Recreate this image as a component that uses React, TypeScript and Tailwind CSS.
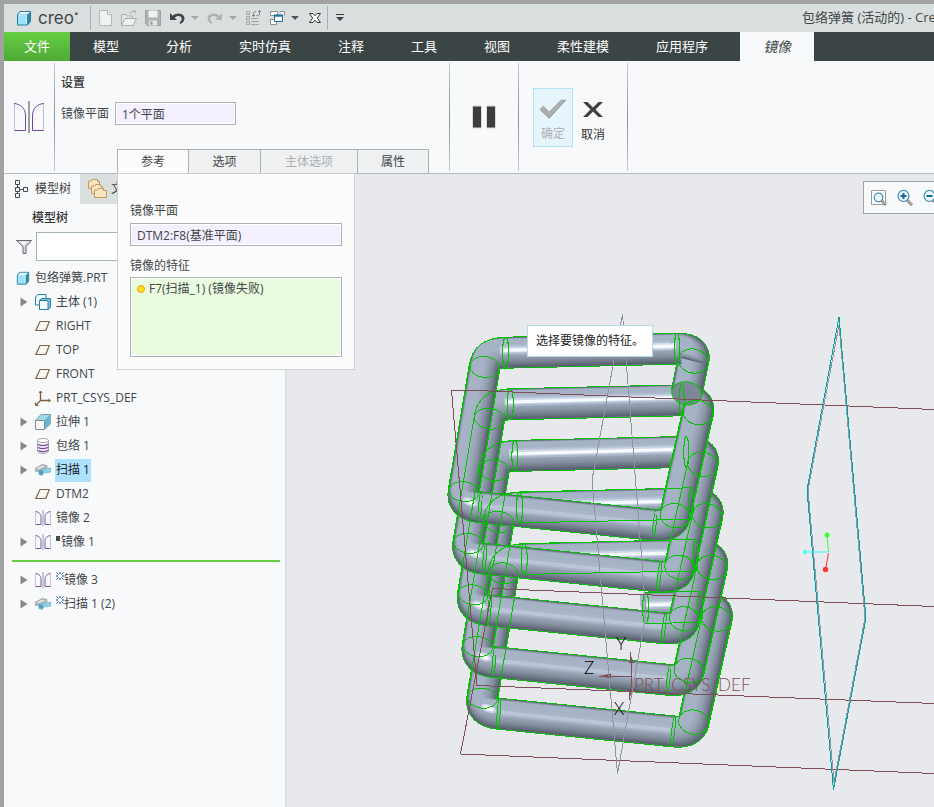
import type { ReactNode } from "react";

type IconProps = { className?: string };

const CubeIcon = ({ className = "w-4 h-4" }: IconProps) => (
  <svg viewBox="0 0 16 16" className={className} aria-hidden="true">
    <path d="M1.500 4.500 4 1.500h10.500v10l-3 3.500h-10z" fill="#2f86a8" stroke="#2b7d9e" />
    <path d="M2 4.500 4.300 2H14l-2.700 2.500z" fill="#e3f7ff" />
    <path d="M2 5h9v9.500H2z" fill="#9be2fb" />
    <path d="M2 5h8.500v9" fill="none" stroke="#c9f1ff" />
  </svg>
);

const NewIcon = () => (
  <svg viewBox="0 0 16 16" className="w-4 h-4" fill="#f0f2f2" stroke="#b3b8b8" aria-hidden="true">
    <path d="M2.500.5h8l4 4v11h-12z" />
    <path d="M10.500.5v4h4" />
  </svg>
);

const OpenIcon = () => (
  <svg viewBox="0 0 16 16" className="w-4 h-4" fill="#e4e7e7" stroke="#a9aeae" aria-hidden="true">
    <path d="M.5 15V4.500h4l1 1.500h6v3" />
    <path d="M.5 15.500 4 8.500h11.500l-3.500 7z" fill="#f0f2f2" />
    <path d="M9 4c1-2.500 3-3 5-2.500M12.500 0l2.500 1.600-2 2" fill="none" />
  </svg>
);

const SaveIcon = () => (
  <svg viewBox="0 0 16 16" className="w-4 h-4" aria-hidden="true">
    <path d="M.5.5h15v15h-13l-2-2z" fill="#aeb3b4" stroke="#9ea3a4" />
    <path d="M3.500.5h9v7h-9z" fill="#f1f3f3" />
    <path d="M4 10.500h8v5H4z" fill="#e3e6e6" />
    <path d="M5.500 11.500h2v3h-2z" fill="#8f9495" />
  </svg>
);

const UndoIcon = () => (
  <svg viewBox="0 0 16 16" className="w-4 h-4" aria-hidden="true">
    <path d="M1 3v7h7L5.700 7.700C8 5.600 12 5.400 12.600 8.300c.3 1.700-.6 3.200-2.100 4.200l1 1.500c2.800-1.500 4.400-3.600 3.900-6.500C14.500 2.900 7.500 2 3.700 5.700z" fill="#3f4648" />
  </svg>
);

const RedoIcon = () => (
  <svg viewBox="0 0 16 16" className="w-4 h-4" aria-hidden="true">
    <path d="M15 3v7H8l2.300-2.300C8 5.600 4 5.400 3.400 8.300c-.3 1.700.6 3.200 2.100 4.200l-1 1.500C1.700 12.500.1 10.400.6 7.500 1.500 2.900 8.500 2 12.300 5.700z" fill="#aeb4b4" />
  </svg>
);

const RegenIcon = () => (
  <svg viewBox="0 0 16 16" className="w-4 h-4" fill="none" stroke="#a2a7a8" aria-hidden="true">
    <path d="M1.500 1.500h3v3h-3zM1.500 6.500h3v3h-3zM1.500 11.500h3v3h-3zM6 8.500h7M6 11.500h8M6 14.500h8" />
    <path d="M8.500 6V3.500C8.500 2 10 1.500 11 2M7 5l1.500 1.500L10 5M14.500 1v3c0 1.500-1.500 2-3 1.500M13 2l1.500-1.500L16 2" stroke="#7c8284" />
  </svg>
);

const WindowsIcon = () => (
  <svg viewBox="0 0 16 16" className="w-4 h-4" aria-hidden="true">
    <path d="M1.500 1.500h7v4h-7zM1.500 9.500h6v5h-6zM10.500 1.500h5v4" fill="#fff" stroke="#888e91" />
    <path d="M5.500 5.500h8v6h-8z" fill="#fff" stroke="#1c7196" />
    <path d="M5 4.500h9v2.200H5z" fill="#1c7196" />
  </svg>
);

const CloseWindowIcon = () => (
  <svg viewBox="0 0 16 16" className="w-4 h-4" aria-hidden="true">
    <path d="M2.500 3.500h3.500L8 5.800l2-2.300h3.500L10.300 8l3.200 4.500H10L8 10.200l-2 2.300H2.500L5.700 8z" fill="#fff" stroke="#33393b" />
  </svg>
);

const Caret = ({ dim = false }: { dim?: boolean }) => (
  <svg viewBox="0 0 8 8" className="-ml-0.5 w-2 h-2" aria-hidden="true">
    <path d="M0 2h8L4 6z" fill={dim ? "#a3a9a9" : "#50575a"} />
  </svg>
);

const MirrorIcon = () => (
  <svg viewBox="0 0 16 16" className="w-4 h-4" fill="none" aria-hidden="true">
    <path d="M.5 15V1.500M15.500 15V1.500" stroke="#c9bfe0" />
    <path d="M.5 1.500c4 .5 5.500 3 5.500 6v7H.5M15.500 1.500c-4 .5-5.500 3-5.500 6v7h5.500" stroke="#7d56a5" />
    <path d="M8 0v16" stroke="#9a9fa3" />
  </svg>
);

const BigMirrorIcon = () => (
  <svg viewBox="0 0 30 32" className="w-[30px] h-8" fill="none" aria-hidden="true">
    <path d="M.5 29.500V2.500M29.500 29.500V2.500" stroke="#c5b9df" />
    <path d="M0 2.500C6.500 3 11.500 7 11.500 15v14.500H.5M30 2.500C23.500 3 18.500 7 18.500 15v14.500h11" stroke="#75449b" />
    <path d="M15 0v32" stroke="#9c9fa2" strokeWidth="2" />
  </svg>
);

const PlaneIcon = () => (
  <svg viewBox="0 0 16 16" className="w-4 h-4" fill="none" aria-hidden="true">
    <path d="M5 3.500h9.300l-3.500 9H.8z" stroke="#80663a" strokeWidth="1.200" />
  </svg>
);

const CsysIcon = () => (
  <svg viewBox="0 0 16 16" className="w-4 h-4" fill="none" stroke="#7b5f33" aria-hidden="true">
    <path d="M5.500 1v9.500H15M5.500 10.500 1 15" strokeWidth="1.300" />
    <path d="M4 3l1.500-2L7 3M13.500 9l2 1.500-2 1.500M.5 12.500v3h3" />
  </svg>
);

const BodyIcon = () => (
  <svg viewBox="0 0 16 16" className="w-4 h-4" fill="#eefaff" stroke="#297f9f" aria-hidden="true">
    <path d="M.5 3 3 .5h8v8L8.500 11h-8z" />
    <path d="m4.500 6.500 2-2h9v8.500l-2 2.500h-9z" fill="#7cc7e2" />
    <path d="M4.500 6.500h8.500v9H4.500z" fill="#f7fcff" />
  </svg>
);

const ExtrudeIcon = () => (
  <svg viewBox="0 0 16 16" className="w-4 h-4" aria-hidden="true">
    <path d="M.5 6.500 6 .5h9.500l-6 6z" fill="#9fd9ee" stroke="#849aa5" />
    <path d="m9.500 6.500 6-6V10l-6 5.500z" fill="#61b6d5" stroke="#8fb0be" />
    <path d="M.5 6.500h9v9h-9z" fill="#f8f8f8" stroke="#8a8f93" />
  </svg>
);

const WrapIcon = () => (
  <svg viewBox="0 0 16 16" className="w-4 h-4" aria-hidden="true">
    <path d="M2.500 2.500v11c1 2.500 10 2.500 11 0v-11" fill="#f4f4f7" stroke="#a7a7ae" />
    <ellipse cx="8" cy="2.500" rx="5.500" ry="2" fill="#fff" stroke="#a7a7ae" />
    <path d="M3 6.500c3 1.600 8 1.600 10.500-.5M3 9.500c3 1.600 8 1.600 10.500-.5M3 12.500c3 1.600 8 1.600 10.500-.5" fill="none" stroke="#77499f" strokeWidth="1.200" />
  </svg>
);

const SweepIcon = () => (
  <svg viewBox="0 0 16 16" className="w-4 h-4" aria-hidden="true">
    <path d="M0 6.500 7 2.500l5 1v2L6 7.500v2.700L0 9z" fill="#b4babd" stroke="#858b8f" strokeWidth=".6" />
    <path d="m1 6.500 6-3 3.500.8L4.500 7z" fill="#dfe3e4" />
    <path d="M4 8.500 8 7l8-1v4l-7 1-2 2.500-3-1z" fill="#8fcfe5" stroke="#6aabc4" strokeWidth=".6" />
    <path d="M4 8.500h4v4.500l-4-.8z" fill="#49a0c3" />
  </svg>
);

const FolderStackIcon = () => (
  <svg viewBox="0 0 20 20" className="w-5 h-5" fill="#fbe6c4" stroke="#c4985a" aria-hidden="true">
    <path d="M.5 9.500V2h3l1-1.500h5v2h2v7z" />
    <path d="M3.500 14.500V7h3l1-1.500h5v2h2v7z" />
    <path d="M6.500 18.500V11h3l1-1.500h5v2h3v7z" />
  </svg>
);

const TreeIcon = () => (
  <svg viewBox="0 0 14 18" className="w-3.5 h-[18px]" fill="none" stroke="#444b4e" aria-hidden="true">
    <path d="M1.500.5h4v4h-4zM1.500 7.500h4v4h-4zM1.500 13.500h4v4h-4zM9.500 7.500h4v4h-4zM3.500 5v2M3.500 12v1M6 9.500h3" />
  </svg>
);

const FilterIcon = () => (
  <svg viewBox="0 0 16 16" className="w-4 h-4" aria-hidden="true">
    <path d="M.5 1.500h15L10 7.500v7H7v-7z" fill="#d5d6d8" stroke="#67696c" />
    <path d="M3 2.500h8l-3 4z" fill="#fff" />
  </svg>
);

const ZoomIcon = ({ kind }: { kind: "fit" | "in" | "out" }) => (
  <svg viewBox="0 0 16 16" className="w-4 h-4 shrink-0" fill="none" aria-hidden="true">
    {kind === "fit" && <path d="M.5.5h14v14H.5z" fill="#fff" stroke="#9a9a9a" />}
    <path d="m10 10 5 5" stroke="#8c8883" strokeWidth="3" />
    <path d="m10.500 10 4.500 4.500" stroke="#ded9d3" />
    <circle cx={kind === "fit" ? 7.500 : 6.500} cy={kind === "fit" ? 7.500 : 6} r={kind === "fit" ? 4.300 : 5.500} fill="#eaf8fd" stroke="#3f8aab" strokeWidth="1.200" />
    {kind !== "fit" && <path d="M3.500 6h6" stroke="#126a95" strokeWidth="2" />}
    {kind === "in" && <path d="M6.500 3v6" stroke="#126a95" strokeWidth="2" />}
  </svg>
);

const menuItems = ["模型", "分析", "实时仿真", "注释", "工具", "视图", "柔性建模", "应用程序"];

type TreeRow = {
  label: string;
  icon: ReactNode;
  expandable?: boolean;
  selected?: boolean;
  mark?: "square" | "star";
};

const treeRows: TreeRow[] = [
  { label: "主体 (1)", icon: <BodyIcon />, expandable: true },
  { label: "RIGHT", icon: <PlaneIcon /> },
  { label: "TOP", icon: <PlaneIcon /> },
  { label: "FRONT", icon: <PlaneIcon /> },
  { label: "PRT_CSYS_DEF", icon: <CsysIcon /> },
  { label: "拉伸 1", icon: <ExtrudeIcon />, expandable: true },
  { label: "包络 1", icon: <WrapIcon />, expandable: true },
  { label: "扫描 1", icon: <SweepIcon />, expandable: true, selected: true },
  { label: "DTM2", icon: <PlaneIcon /> },
  { label: "镜像 2", icon: <MirrorIcon /> },
  { label: "镜像 1", icon: <MirrorIcon />, expandable: true, mark: "square" },
];

const pendingRows: TreeRow[] = [
  { label: "镜像 3", icon: <MirrorIcon />, expandable: true, mark: "star" },
  { label: "扫描 1 (2)", icon: <SweepIcon />, expandable: true, mark: "star" },
];

const TreeItem = ({ row }: { row: TreeRow }) => (
  <li className="flex items-center h-6 pl-4">
    <span className="flex w-[15px] shrink-0">
      {row.expandable && (
        <button type="button" aria-label={`展开 ${row.label}`}>
          <svg viewBox="0 0 8 10" className="w-2 h-2.5">
            <path d="M.5.5v9L7.500 5z" fill="#858789" />
          </svg>
        </button>
      )}
    </span>
    {row.icon}
    <button
      type="button"
      className={`flex items-center h-[23px] ml-1 px-px whitespace-nowrap ${row.selected ? "bg-[#ade1ff] text-[#222]" : ""}`}
    >
      {row.mark === "square" && <span className="w-1 h-[5px] mr-px mb-2 bg-[#4a4a4a]" />}
      {row.mark === "star" && (
        <svg viewBox="0 0 8 8" className="w-2 h-2 mb-2" fill="none" stroke="#173d91" aria-hidden="true">
          <path d="M4 0v2M4 6v2M0 4h2M6 4h2M.5.5l2 2M7.500.5l-2 2M.5 7.500l2-2M7.500 7.500l-2-2" />
        </svg>
      )}
      {row.label}
    </button>
  </li>
);

const Divider = () => (
  <div className="w-px my-0.5 bg-linear-to-b from-[#c8cbce] via-[#8d9194] to-[#c8cbce]" />
);

const TitleBar = () => (
  <header className="flex items-center h-7 pl-3 bg-[#d9dfde] text-[#414749]">
    <CubeIcon />
    <span className="ml-1.5 w-10 text-[17px] leading-6 font-[Inter,sans-serif]">
      creo<sup className="text-[8px] -top-2">•</sup>
    </span>
    <div className="w-px h-6 ml-3 bg-[#a9afb0]" />
    <div className="flex items-center gap-2 ml-1.5">
      <button type="button" aria-label="新建"><NewIcon /></button>
      <button type="button" aria-label="打开"><OpenIcon /></button>
      <button type="button" aria-label="保存"><SaveIcon /></button>
      <button type="button" aria-label="撤消"><UndoIcon /></button>
      <button type="button" aria-label="撤消列表"><Caret dim /></button>
      <button type="button" aria-label="重做"><RedoIcon /></button>
      <button type="button" aria-label="重做列表"><Caret dim /></button>
      <button type="button" aria-label="重新生成"><RegenIcon /></button>
      <button type="button" aria-label="窗口"><WindowsIcon /></button>
      <button type="button" aria-label="窗口列表"><Caret /></button>
      <button type="button" aria-label="关闭"><CloseWindowIcon /></button>
    </div>
    <div className="w-px h-6 ml-1 bg-[#a9afb0]" />
    <button type="button" aria-label="自定义" className="ml-2">
      <svg viewBox="0 0 8 8" className="w-2 h-2">
        <path d="M0 0h8v1H0zM0 3h8L4 7z" fill="#3a4042" />
      </svg>
    </button>
    <h1 className="w-[132px] ml-auto overflow-hidden whitespace-nowrap text-[13px]">包络弹簧 (活动的) - Creo</h1>
  </header>
);

const MenuBar = () => (
  <nav className="flex h-[29px] bg-[#3c4546] text-white text-[13px]">
    <button type="button" className="w-[66px] bg-linear-to-b from-[#64cf42] to-[#4fa938]">文件</button>
    <div className="flex items-center gap-[47px] pl-[23px] pr-8">
      {menuItems.map((item) => (
        <button type="button" key={item} className="whitespace-nowrap">{item}</button>
      ))}
    </div>
    <button type="button" className="w-[74px] bg-[#f8f9fb] text-[#3c4546] text-sm italic">镜像</button>
  </nav>
);

const fieldClass = "h-[23px] px-1.5 border border-[#aeb1b4] bg-[#f5f0ff] shadow-[inset_0_0_0_1px_#fff] outline-none";

const ReferencePanel = () => (
  <section className="absolute left-0 top-full z-10 w-[238px] px-3 pt-[25px] pb-3 bg-[#fcfcfc] border border-[#cdd1d4]">
    <label htmlFor="mirror-plane-ref" className="block h-6 leading-6">镜像平面</label>
    <input id="mirror-plane-ref" readOnly value="DTM2:F8(基准平面)" className={`${fieldClass} w-full`} />
    <h3 className="h-[31px] pt-1 leading-[31px]">镜像的特征</h3>
    <ul className="h-20 px-1.5 py-px border border-[#aeb1b4] bg-[#eafcdf] shadow-[inset_0_0_0_1px_#fff]">
      <li className="flex items-center h-5 gap-1 whitespace-nowrap">
        <span className="w-2 h-2 rounded-full bg-[#ffe51c] border border-[#f59b16]" />
        F7(扫描_1) (镜像失败)
      </li>
    </ul>
  </section>
);

const tabClass = "h-6 -mr-px border border-b-0 border-[#aeb1b4]";

const Ribbon = () => (
  <div className="flex h-[113px] bg-[#f8f9fb] border-b border-[#b4babd]">
    <div className="flex items-center w-[50px] pl-2.5">
      <BigMirrorIcon />
    </div>
    <Divider />
    <div className="flex flex-col w-[394px] pl-1.5">
      <h2 className="pt-3 leading-5 font-medium text-[#333]">设置</h2>
      <div className="flex items-center pt-[9px]">
        <label htmlFor="mirror-plane" className="w-[54px]">镜像平面</label>
        <input id="mirror-plane" readOnly value="1个平面" className={`${fieldClass} w-[121px]`} />
      </div>
      <div className="relative flex mt-auto ml-14">
        <button type="button" className={`${tabClass} w-[72px] bg-[#fcfcfc]`}>参考</button>
        <button type="button" className={`${tabClass} w-[73px] bg-[#eef0f2]`}>选项</button>
        <button type="button" disabled className={`${tabClass} w-[98px] bg-[#eef0f2] text-[#adb0b3]`}>主体选项</button>
        <button type="button" className={`${tabClass} w-[72px] bg-[#eef0f2]`}>属性</button>
        <ReferencePanel />
      </div>
    </div>
    <Divider />
    <button type="button" aria-label="暂停" className="flex items-center justify-center w-[68px]">
      <svg viewBox="0 0 24 24" className="w-6 h-6">
        <path d="M.5 1h9v22h-9zM14.500 1h9v22h-9z" fill="#3c3c3c" stroke="#dcdcdc" />
      </svg>
    </button>
    <Divider />
    <div className="flex items-center w-[108px] pl-3.5">
      <button type="button" disabled className="flex flex-col items-center w-10 h-[59px] pt-1.5 bg-[#e6f4fb] border border-[#b3e2f8] text-[#adb0b3]">
        <svg viewBox="0 0 30 28" className="w-[30px] h-7">
          <path d="M1 14.500 5 11l6 6L23 5h5.500L11 23.500z" fill="#adafaf" />
          <path d="M2 15.500 11 24l17.500-19" fill="none" stroke="#85898b" />
        </svg>
        <span className="leading-6">确定</span>
      </button>
      <button type="button" className="flex flex-col items-center w-10 h-[59px] pt-[7px] text-[#333]">
        <svg viewBox="0 0 30 28" className="w-[30px] h-7">
          <path d="M5 7h4.500l5.500 5.500L20.500 7H25l-7.500 7.500L25 22h-4.500L15 16.500 9.500 22H5l7.500-7.500z" fill="#3e4042" />
        </svg>
        <span className="leading-6">取消</span>
      </button>
    </div>
    <Divider />
  </div>
);

const ModelTree = () => (
  <aside className="w-[283px] shrink-0 bg-[#f8f9fb] border-r-2 border-[#d9dfdf]">
    <div className="flex h-[30px]">
      <button type="button" className="flex items-center w-[76px] gap-[7px] pl-2.5">
        <TreeIcon />
        模型树
      </button>
      <button type="button" className="flex items-center grow gap-[3px] pl-2 bg-[#d9e0df]">
        <FolderStackIcon />
        文件夹浏览器
      </button>
    </div>
    <h2 className="pl-7 h-[27px] leading-[27px] font-medium text-[#333]">模型树</h2>
    <div className="flex items-center pl-3 pr-2 pt-px gap-1">
      <FilterIcon />
      <input aria-label="过滤模型树" className="grow h-[29px] px-1 bg-white border border-[#a6b4b1] outline-none" />
    </div>
    <div className="flex items-center h-6 mt-[5px] pl-3 gap-[5px]">
      <CubeIcon className="w-3.5 h-3.5" />
      包络弹簧.PRT
    </div>
    <ul>
      {treeRows.map((row) => (
        <TreeItem key={row.label} row={row} />
      ))}
    </ul>
    <div className="h-0.5 mt-1.5 mb-1.5 ml-2 mr-[5px] bg-[#66cc46]" />
    <ul>
      {pendingRows.map((row) => (
        <TreeItem key={row.label} row={row} />
      ))}
    </ul>
  </aside>
);

// Pitch of the coil between one turn and the next
const PITCH_X = 4.65;
const PITCH_Y = 51.6;

const shift = (k: number) => `translate(${PITCH_X * k} ${PITCH_Y * k})`;

const shades = [
  "#59616e", "#636c7a", "#6d7786", "#778191", "#808b9b", "#8893a4",
  "#8f9aab", "#95a1b2", "#9aa6b8", "#9eaabc", "#a2aec0", "#a6b2c5",
];

// Wire drawn as a stack of narrowing strokes, lit from the upper left
const Tube = ({ d, outline = true }: { d: string; outline?: boolean }) => (
  <g fill="none">
    {outline && <path d={d} stroke="#00c400" strokeWidth="32" shapeRendering="crispEdges" />}
    <path d={d} stroke="#8792a3" strokeWidth="30" shapeRendering="crispEdges" />
    {shades.map((color, i) => (
      <path
        key={color}
        d={d}
        stroke={color}
        strokeWidth={30 - i * 1.7}
        transform={`translate(${-0.5 * i} ${-0.7 * i})`}
      />
    ))}
  </g>
);

const backTurn = "M677 348.700 505.600 352.700Q487 353 484.700 367";
const rightBend = "M676 348.700Q696.500 348 693.300 361";
const frontTurn =
  "M484.700 366 463.700 491.700Q461.500 505.500 480 507.300L654.500 525Q672.500 527 675 515.700L698 412.600";

const Spring = () => (
  <g>
    {[5, 4, 3, 2, 1, 0].map((k) => (
      <g key={k} transform={shift(k)}>
        {k === 5 ? <Tube d="M622.500 350 678 348.700" /> : <Tube d={backTurn} />}
        <Tube d={rightBend} />
        <path d={k === 5 ? "M623 346.500 676 345" : "M500 350 676 345.500"} stroke="#b9c7da" strokeWidth="10" opacity=".6" />
        <path d={k === 5 ? "M623 346.500 676 345" : "M500 350 676 345.500"} stroke="#d3dfee" strokeWidth="6" opacity=".8" />
        <path d={k === 5 ? "M623 347 674 345.500" : "M502 350.500 674 346"} stroke="#f7fbff" strokeWidth="3" />
      </g>
    ))}
    {[4, 3, 2, 1, 0].map((k) => (
      <g key={k} transform={shift(k)}>
        <Tube d={frontTurn} />
        <path d="M482 505.500 652 523" stroke="#adb9cb" strokeWidth="9" opacity=".6" />
        <path d="M482 506 652 523.500" stroke="#becadc" strokeWidth="4" opacity=".8" />
        <ellipse cx="470" cy="502" rx="8" ry="4" fill="#e4ecf8" opacity=".6" transform="rotate(22 470 502)" />
        <ellipse cx="470" cy="502" rx="5" ry="2" fill="#fff" transform="rotate(22 470 502)" />
      </g>
    ))}
    <Tube d="M693.300 360 686.700 393" />
    <Tube d={rightBend} outline={false} />
    <path d="M655 346.500 676 346" stroke="#d3dfee" strokeWidth="6" />
    <path d="M655 346.500 674 346" stroke="#f7fbff" strokeWidth="3" />
    <ellipse cx="686.700" cy="393.300" rx="15" ry="11.500" fill="#7d8896" stroke="#00c400" transform="rotate(10 686.700 393.300)" />
    <g fill="none" stroke="#00c400" shapeRendering="crispEdges">
      {[0, 1, 2, 3, 4, 5].map((k) => (
        <g key={k} transform={shift(k)}>
          {k < 5 && (
            <>
              <ellipse cx="505.600" cy="352.700" rx="3" ry="15.500" />
              <ellipse cx="484.700" cy="367" rx="15" ry="10.500" transform="rotate(8 484.700 367)" />
              <ellipse cx="463.700" cy="491.700" rx="15" ry="10" transform="rotate(8 463.700 491.700)" />
              <ellipse cx="480" cy="507.300" rx="1.500" ry="15.500" transform="rotate(5 480 507.300)" />
              <ellipse cx="654.500" cy="525" rx="1.500" ry="15.500" transform="rotate(7 654.500 525)" />
              <ellipse cx="675" cy="515.700" rx="15" ry="12" transform="rotate(12 675 515.700)" />
              <path d="M470 363 448.700 489.500M499.500 370 478.500 494" />
              <path d="M660.500 512.500 683.500 409.500M689.500 519 712.500 416" />
              <path d="M505 337.500Q474 338 469.500 364" />
            </>
          )}
          <ellipse cx="677" cy="348.700" rx="2.500" ry="15.500" />
          <ellipse cx="693.300" cy="361" rx="15" ry="12" transform="rotate(12 693.300 361)" />
          {(k === 3 || k === 4) && <path d="M506 337.500 677 333M506 368 677 364.500" />}
          {k === 5 && <path d="M623 334.500 677 333M623 365.500 677 364.500" />}
        </g>
      ))}
      <ellipse cx="645.700" cy="608" rx="3" ry="15.500" />
    </g>
  </g>
);

const Viewport = () => (
  <main className="relative flex-1 overflow-hidden bg-[#e8e9ed]">
    <svg viewBox="287 174 647 633" className="absolute inset-0 w-full h-full" role="img" aria-label="包络弹簧">
      <Spring />
      <g fill="none" stroke="#7e4e55" shapeRendering="crispEdges">
        <path d="M477 685.500 451.500 390.500 489 391 690 399.500 934 409.500" />
        <path d="M477 685.500 934 703.500" />
        <path d="M934 606.500 492.500 588.500 460.500 754 934 773.500" />
        <path d="M598 676 632 677M630 652v10M631 662 632 680 629 700" />
      </g>
      <path d="m600 676 11-2.500v5zM629 663l2-7 3 7zM628 689h6l-3 8z" fill="#7e4e55" />
      <path d="M622.500 314 592 480 617.500 774 646 614z" fill="none" stroke="#8f939f" shapeRendering="crispEdges" />
      <g fill="none" shapeRendering="crispEdges">
        <path d="M839 325 808 490 834 782 865 618z" stroke="#9295a3" />
        <path d="M839 317 807 490 833.500 790 866 618z" stroke="#08a19c" />
      </g>
      <g fontFamily="Lato, sans-serif" fontWeight="300" fontSize="17">
        <text x="634" y="691" fill="#7e4e55">PRT_CSYS_DEF</text>
        <g fill="#000" textAnchor="middle">
          <text x="621" y="650">Y</text>
          <text x="589" y="674">Z</text>
          <text x="619" y="715">X</text>
        </g>
      </g>
      <path d="M805 552h23" stroke="#3ff" />
      <path d="M827 535 828.500 552" stroke="#3f3" />
      <path d="M828.500 553 825.500 570" stroke="#f33" />
      <circle cx="805" cy="552" r="2" fill="#3ff" />
      <circle cx="827" cy="535" r="2.500" fill="#3f3" />
      <circle cx="825.500" cy="569.500" r="2.700" fill="#f33" />
    </svg>
    <div className="absolute top-[7px] right-0 flex items-center gap-2.5 w-[71px] h-[33px] pl-[7px] overflow-hidden bg-[#f8f9fb] border border-r-0 border-[#a1a4a7]">
      <button type="button" aria-label="重新调整" className="shrink-0"><ZoomIcon kind="fit" /></button>
      <button type="button" aria-label="放大" className="shrink-0"><ZoomIcon kind="in" /></button>
      <button type="button" aria-label="缩小" className="shrink-0"><ZoomIcon kind="out" /></button>
    </div>
    <div role="tooltip" className="absolute left-[240px] top-[151px] flex items-center h-8 px-2 bg-white border border-[#b5d9ea] text-[#222] whitespace-nowrap">
      选择要镜像的特征。
    </div>
  </main>
);

const App = () => {
  return (
    <div className="flex flex-col h-screen overflow-hidden border-t-4 border-l-4 border-[#a2a2a2] bg-[#e8e9ed] text-xs text-[#414548] font-['Open_Sans','Noto_Sans_CJK_SC',sans-serif]">
      <TitleBar />
      <MenuBar />
      <Ribbon />
      <div className="flex flex-1 min-h-0">
        <ModelTree />
        <Viewport />
      </div>
    </div>
  );
};

export default App;
